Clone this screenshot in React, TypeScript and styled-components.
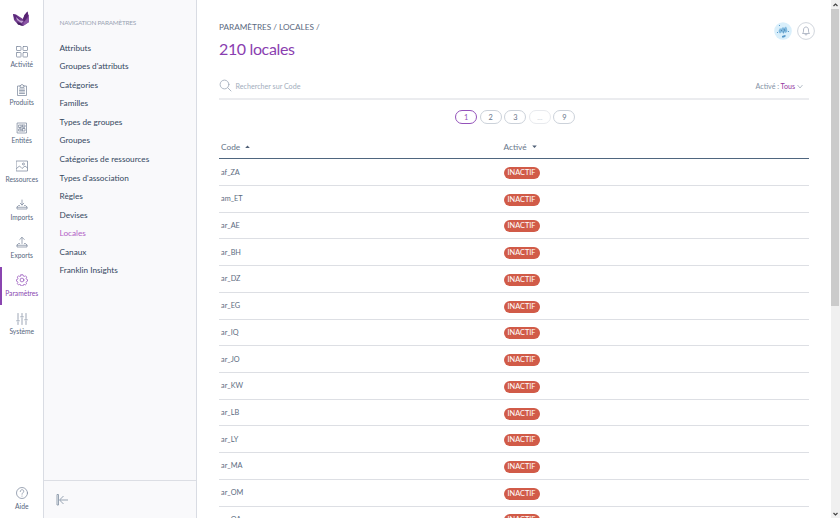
import React from "react";
import styled, { createGlobalStyle } from "styled-components";

const GlobalStyle = createGlobalStyle`
  * { box-sizing: border-box; }
  html, body { margin: 0; height: 100%; overflow: hidden; background: #fff; }
  body { font-family: Lato, "Open Sans", sans-serif; color: #67768a; }
  svg { display: block; flex: none; }
`;

const Page = styled.div`
  display: flex;
  width: 840px;
  height: 518px;
  overflow: hidden;
`;

const Rail = styled.nav`
  display: flex;
  flex-direction: column;
  flex: none;
  width: 44px;
  border-right: 1px solid #d9dce3;
`;

const Logo = styled.div`
  height: 38.1px;
  flex: none;
  padding: 9px 0 0 12px;
`;

const RailItem = styled.a<{ $active?: boolean; $bottom?: boolean }>`
  display: flex;
  flex-direction: column;
  align-items: center;
  flex: none;
  height: 38.15px;
  padding-top: 7.5px;
  border-left: 2px solid ${(p) => (p.$active ? "#8a45b0" : "transparent")};
  padding-right: 1.5px;
  margin-top: ${(p) => (p.$bottom ? "auto" : 0)};
  color: ${(p) => (p.$active ? "#9452ba" : "#7d8a9e")};
`;

const RailLabel = styled.span<{ $active?: boolean }>`
  margin-top: 2.5px;
  font-size: 6.7px;
  line-height: 9px;
  white-space: nowrap;
  color: ${(p) => (p.$active ? "#8a45b0" : "#56667e")};
`;

const Sidebar = styled.aside`
  display: flex;
  flex-direction: column;
  flex: none;
  width: 153px;
  background: #f9f9fb;
  border-right: 1px solid #d9dce3;
`;

const SidebarTitle = styled.div`
  padding: 16.5px 0 0 15.5px;
  height: 38.9px;
  font-size: 6.4px;
  letter-spacing: -0.24px;
  line-height: 11px;
  white-space: nowrap;
  color: #9aa4b3;
`;

const SidebarLink = styled.a<{ $active?: boolean }>`
  display: block;
  height: 18.53px;
  padding-left: 15.5px;
  font-size: 8.23px;
  line-height: 18.5px;
  white-space: nowrap;
  color: ${(p) => (p.$active ? "#b262c6" : "#34485f")};
`;

const SidebarFooter = styled.div`
  display: flex;
  align-items: center;
  height: 38px;
  margin-top: auto;
  padding-left: 12px;
  border-top: 1px solid #dcdee4;
`;

const Main = styled.main`
  flex: 1;
  padding: 20px 22px 0;
  min-width: 0;
`;

const Header = styled.header`
  display: flex;
  justify-content: space-between;
  height: 53px;
`;

const Breadcrumb = styled.div`
  padding-top: 1px;
  font-size: 8.2px;
  line-height: 13px;
  color: #5a697e;
`;

const Title = styled.h1`
  margin: 4px 0 0;
  font-size: 16px;
  letter-spacing: -0.36px;
  line-height: 22px;
  font-weight: 400;
  color: #8a3eb0;
`;

const HeaderActions = styled.div`
  display: flex;
  gap: 5px;
  padding-top: 1.5px;
  margin-right: -6px;
`;

const SearchBar = styled.div`
  display: flex;
  align-items: center;
  height: 27px;
  border-bottom: 2px solid #ebecef;
`;

const SearchHint = styled.span`
  flex: 1;
  padding: 1px 0 0 3.5px;
  font-size: 7.15px;
  color: #a3aebd;
`;

const Filter = styled.span`
  display: flex;
  align-items: center;
  padding: 1px 6px 0 0;
  font-size: 7.15px;
  color: #8491a4;
`;

const FilterValue = styled.span`
  margin: 0 2px 0 1.5px;
  color: #94389f;
`;

const Pagination = styled.div`
  display: flex;
  justify-content: center;
  gap: 2.6px;
  height: 35.2px;
  padding-top: 9.5px;
  padding-left: 2.6px;
`;

const PageButton = styled.span<{ $state?: "current" | "disabled" }>`
  width: 22px;
  height: 14px;
  border: 1px solid ${(p) => (p.$state === "current" ? "#9452ba" : p.$state === "disabled" ? "#e8eaee" : "#ccd2da")};
  border-radius: 7px;
  font-size: 7.4px;
  line-height: 13px;
  text-align: center;
  color: ${(p) => (p.$state === "current" ? "#9452ba" : p.$state === "disabled" ? "#ccd1d9" : "#67768a")};
`;

const TableHead = styled.div`
  display: grid;
  grid-template-columns: 282.5px 1fr;
  align-items: center;
  height: 24px;
  padding-left: 2px;
  border-bottom: 1px solid #4f667f;
  font-size: 8.3px;
`;

const HeadCell = styled.span`
  display: flex;
  align-items: center;
  gap: 5px;
`;

const Row = styled.div`
  display: grid;
  grid-template-columns: 282.5px 1fr;
  align-items: center;
  height: 26.72px;
  padding-left: 2px;
  border-bottom: 1px solid #dddfe4;
  font-size: 7.3px;
`;

const Code = styled.span`
  padding-top: 1px;
  line-height: 12px;
  color: #5c6b80;
`;

const Badge = styled.span`
  width: 36px;
  height: 12px;
  margin-top: 2px;
  border-radius: 6px;
  background: #d15b48;
  color: #fff;
  font-size: 7.4px;
  line-height: 12.5px;
  text-align: center;
`;

const Scrollbar = styled.div`
  display: flex;
  flex-direction: column;
  flex: none;
  width: 9px;
  background: #f0f0f0;
`;

const ScrollEnd = styled.div`
  display: flex;
  align-items: center;
  justify-content: center;
  height: 9px;
  color: #444;
`;

const ScrollThumb = styled.div`
  height: 297px;
  margin: 0 1px 0 0;
  background: #cbcbcb;
`;

const ScrollSpace = styled.div`
  flex: 1;
`;

const Icon = ({ size = 12, children }: { size?: number; children: React.ReactNode }) => (
  <svg width={size} height={size} viewBox="0 0 24 24" fill="none" stroke="currentColor" strokeWidth="1.5" strokeLinecap="round" strokeLinejoin="round">
    {children}
  </svg>
);

const icons: Record<string, React.ReactNode> = {
  activity: <path d="M2 1h7q1 0 1 1v6q0 1-1 1H2q-1 0-1-1V2q0-1 1-1zM15 1h7q1 0 1 1v6q0 1-1 1h-7q-1 0-1-1V2q0-1 1-1zM2 13h7q1 0 1 1v7q0 1-1 1H2q-1 0-1-1v-7q0-1 1-1zM15 13h7q1 0 1 1v7q0 1-1 1h-7q-1 0-1-1v-7q0-1 1-1z" />,
  products: <path d="M8 4H3v19h18V4h-5M8 6V3h2c0-3 4-3 4 0h2v3zM7 10h10M7 13h10M7 16h10M7 19h10" />,
  entities: <path d="M3 2h18v20H3zM6 6h4v5H6zM14 6h4v4h-4zM6 14h4v4H6zM14 13h4v5h-4zM12 5v14M8 11v3M16 10v3" />,
  assets: <path d="M1 2h22v20H1zM1 17l6-5 5 5 6-5 5 4M13 8a2 2 0 1 0 4 0 2 2 0 1 0-4 0" />,
  imports: <path d="M12 4v10M8.500 10.500l3.500 3.500 3.500-3.500M7 15H5l-3 3v4h20v-4l-3-3h-2M2 18.500h20" />,
  exports: <path d="M12 15V3M7.500 7L12 2.500 16.500 7M7 15H5l-3 3v4h20v-4l-3-3h-2M2 18.500h20" />,
  settings: (
    <>
      <path d="M10 1.500h4l.8 2.700 1.700.7 2.500-1.300 2.500 2.700-1.300 2.400.7 1.800 2.100.8v3l-2.300 1-.7 1.800 1.200 2.400-2.600 2.400-2.300-1.200-1.700.8-.8 2.500h-3.700l-.8-2.500-1.800-.8-2.400 1.200-2.500-2.500 1.200-2.500-.7-1.700-2.200-.9v-3l2.300-.8.7-1.900-1.300-2.400L5 3.600l2.500 1.300 1.700-.7z" />
      <circle cx="12" cy="12" r="3.800" />
    </>
  ),
  system: <path d="M4 1v12M4 18v5M1.500 15.500h5M12 1v4M12 10v13M9.500 7.500h5M20 1v10M20 16v7M17.500 13.500h5" />,
  help: (
    <>
      <circle cx="12" cy="12" r="11" />
      <path d="M8.500 9c0-5 7-4.500 7-.5 0 3-3.500 3-3.500 6M12 18v.5" />
    </>
  ),
};

const railItems = [
  ["activity", "Activité"],
  ["products", "Produits"],
  ["entities", "Entités"],
  ["assets", "Ressources"],
  ["imports", "Imports"],
  ["exports", "Exports"],
  ["settings", "Paramètres"],
  ["system", "Système"],
];

const links = [
  "Attributs", "Groupes d'attributs", "Catégories", "Familles", "Types de groupes", "Groupes",
  "Catégories de ressources", "Types d'association", "Règles", "Devises", "Locales", "Canaux", "Franklin Insights",
];

const locales = [
  "af_ZA", "am_ET", "ar_AE", "ar_BH", "ar_DZ", "ar_EG", "ar_IQ", "ar_JO", "ar_KW", "ar_LB", "ar_LY", "ar_MA", "ar_OM", "ar_QA",
];

export default function App() {
  return (
    <Page>
      <GlobalStyle />
      <Rail>
        <Logo>
          <svg width="18" height="18" viewBox="0 0 18 18">
            <path d="M1 5l3 .5 7 4.500 1.500-4 3-3.500.8 3L17 6.500v6.500l-6 4-5-1.500L2 11z" fill="#713c8e" />
            <path d="M1 5l3 1 5 5.500L2.500 10z" fill="#5b2a7b" />
            <path d="M4 8l4 3.500 3.500.5-2 2L5 11z" fill="#c3a5d3" />
            <path d="M11 10l1.500-4 3-3.500.3 5L12 13z" fill="#55216f" />
            <path d="M16 6.500l1 0v6.500l-6 4 1-4 4-4z" fill="#8a55a4" />
            <path d="M5 13l4 1.500 2 2.500-5-1.500z" fill="#45205f" />
          </svg>
        </Logo>
        {railItems.map(([icon, label]) => {
          const active = icon === "settings";
          return (
            <RailItem key={icon} $active={active}>
              <Icon>{icons[icon]}</Icon>
              <RailLabel $active={active}>{label}</RailLabel>
            </RailItem>
          );
        })}
        <RailItem $bottom>
          <Icon>{icons.help}</Icon>
          <RailLabel>Aide</RailLabel>
        </RailItem>
      </Rail>

      <Sidebar>
        <SidebarTitle>NAVIGATION PARAMÈTRES</SidebarTitle>
        {links.map((l) => (
          <SidebarLink key={l} $active={l === "Locales"}>{l}</SidebarLink>
        ))}
        <SidebarFooter>
          <svg width="13" height="12" viewBox="0 0 13 12" fill="none" stroke="#8b98a9" strokeWidth="0.9">
            <path d="M1 .5h1.500v10.500H1zM12 6H4M7.500 2L3.500 6l4 4" />
          </svg>
        </SidebarFooter>
      </Sidebar>

      <Main>
        <Header>
          <div>
            <Breadcrumb>PARAMÈTRES / LOCALES /</Breadcrumb>
            <Title>210 locales</Title>
          </div>
          <HeaderActions>
            <svg width="18" height="18" viewBox="0 0 18 18">
              <circle cx="9" cy="9" r="8.800" fill="#d9effb" />
              <path d="M4.500 9l1.500-3 1 1 2-2 1 1 2-1.500 1 2 .5 3-2 1.500-1-1-1 2-1.500-2-2 1.500-1-1z" fill="#80b9df" />
              <path d="M8 14l3-1 1 1-2 1.500H8zM5 3h1v1H5zM14 9h1v1h-1zM3 10h1v1H3z" fill="#5798ca" />
              <path d="M7 8l1 1M10 7l1 2M9 10h1" stroke="#4a7ea6" strokeWidth=".8" />
            </svg>
            <svg width="18" height="18" viewBox="0 0 18 18" fill="none" stroke="#a1aaba" strokeWidth=".8">
              <circle cx="9" cy="9" r="8.400" stroke="#c4cad3" />
              <path d="M5.500 11.500c1-1 1-2 1-3.500 0-4 5-4 5 0 0 1.500 0 2.500 1 3.500zM8 12c0 1.500 2 1.500 2 0" />
            </svg>
          </HeaderActions>
        </Header>

        <SearchBar>
          <svg width="13" height="13" viewBox="0 0 13 13" fill="none" stroke="#a6b0bd" strokeWidth=".9" strokeLinecap="round">
            <circle cx="5.500" cy="5.500" r="4.400" />
            <path d="M8.700 8.700l3.300 3.300" />
          </svg>
          <SearchHint>Rechercher sur Code</SearchHint>
          <Filter>
            Activé : <FilterValue>Tous</FilterValue>
            <svg width="6" height="5" viewBox="0 0 6 5" fill="none" stroke="#a6b0bd" strokeWidth=".8">
              <path d="M.5 1L3 4l2.500-3" />
            </svg>
          </Filter>
        </SearchBar>

        <Pagination>
          <PageButton $state="current">1</PageButton>
          <PageButton>2</PageButton>
          <PageButton>3</PageButton>
          <PageButton $state="disabled">...</PageButton>
          <PageButton>9</PageButton>
        </Pagination>

        <TableHead>
          <HeadCell>
            Code
            <svg width="5" height="3" viewBox="0 0 5 3"><path d="M.2 3L2.500.5 4.800 3z" fill="#4f5f76" /></svg>
          </HeadCell>
          <HeadCell>
            Activé
            <svg width="5" height="3" viewBox="0 0 5 3"><path d="M.2.500L2.500 3 4.800.500z" fill="#4f5f76" /></svg>
          </HeadCell>
        </TableHead>
        {locales.map((code) => (
          <Row key={code}>
            <Code>{code}</Code>
            <Badge>INACTIF</Badge>
          </Row>
        ))}
      </Main>

      <Scrollbar>
        <ScrollEnd>
          <svg width="5" height="4" viewBox="0 0 5 4" fill="none" stroke="currentColor" strokeWidth="1.200"><path d="M.5 3l2-2 2 2" /></svg>
        </ScrollEnd>
        <ScrollThumb />
        <ScrollSpace />
        <ScrollEnd>
          <svg width="5" height="4" viewBox="0 0 5 4" fill="none" stroke="currentColor" strokeWidth="1.200"><path d="M.5 1l2 2 2-2" /></svg>
        </ScrollEnd>
      </Scrollbar>
    </Page>
  );
}
